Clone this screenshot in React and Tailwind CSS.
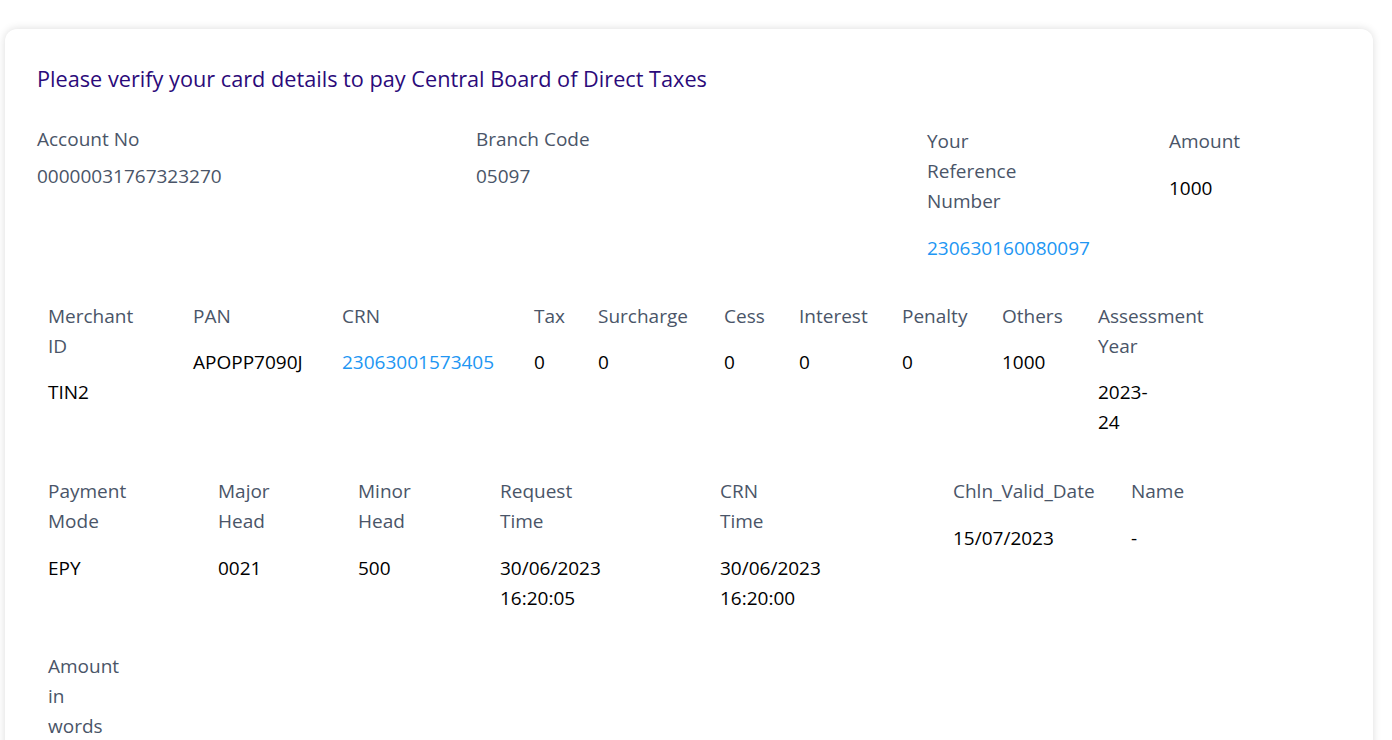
import React from "react";

const Label = ({ children, w }) => (
  <div className={`text-[#4a5568] ${w || ""}`}>{children}</div>
);

function Col({ width, wrap, label, value, link, gap = "mt-[17px]" }) {
  return (
    <div className={`shrink-0 ${width}`}>
      <div className={`text-[#4a5568] ${wrap || ""}`}>{label}</div>
      <div className={`${gap} ${wrap || ""} ${link ? "text-[#2196f3]" : "text-black"}`}>{value}</div>
    </div>
  );
}

export default function App() {
  return (
    <div
      className="min-h-screen bg-white pt-[29px] pl-[5px] pr-[19px] text-[19px] leading-[30px]"
      style={{ fontFamily: '"Open Sans", "Noto Sans", sans-serif' }}
    >
      <div className="rounded-xl bg-white shadow-[0_0_8px_rgba(0,0,0,0.14)] px-8 pt-[35px] pb-10 min-h-[760px]">
        <h1 className="text-[21.7px] leading-[30px] text-[#2b0a7a]">
          Please verify your card details to pay Central Board of Direct Taxes
        </h1>

        {/* Row 1 */}
        <div className="mt-[30px] flex">
          <div className="w-[439px] shrink-0">
            <Label>Account No</Label>
            <div className="mt-[7px] text-[#4a5568]">00000031767323270</div>
          </div>
          <div className="w-[451px] shrink-0">
            <Label>Branch Code</Label>
            <div className="mt-[7px] text-[#4a5568]">05097</div>
          </div>
          <div className="w-[242px] shrink-0 mt-[2px]">
            <Label w="w-[100px]">Your Reference Number</Label>
            <div className="mt-[17px] text-[#2196f3]">230630160080097</div>
          </div>
          <div className="mt-[2px]">
            <Label>Amount</Label>
            <div className="mt-[17px] text-black">1000</div>
          </div>
        </div>

        {/* Row 2 */}
        <div className="mt-[38px] pl-[11px] flex">
          <Col width="w-[145px]" wrap="w-[90px]" label="Merchant ID" value="TIN2" gap="mt-4" />
          <Col width="w-[149px]" label="PAN" value="APOPP7090J" gap="mt-4" />
          <Col width="w-[192px]" label="CRN" value="23063001573405" link gap="mt-4" />
          <Col width="w-[64px]" label="Tax" value="0" gap="mt-4" />
          <Col width="w-[126px]" label="Surcharge" value="0" gap="mt-4" />
          <Col width="w-[75px]" label="Cess" value="0" gap="mt-4" />
          <Col width="w-[103px]" label="Interest" value="0" gap="mt-4" />
          <Col width="w-[100px]" label="Penalty" value="0" gap="mt-4" />
          <Col width="w-[96px]" label="Others" value="1000" gap="mt-4" />
          <Col width="w-[60px]" wrap="w-[60px]" label="Assessment Year" value="2023-24" gap="mt-4" />
        </div>

        {/* Row 3 */}
        <div className="mt-[39px] pl-[11px] flex">
          <Col width="w-[170px]" wrap="w-[90px]" label="Payment Mode" value="EPY" />
          <Col width="w-[140px]" wrap="w-[75px]" label="Major Head" value="0021" />
          <Col width="w-[142px]" wrap="w-[75px]" label="Minor Head" value="500" />
          <Col width="w-[220px]" wrap="w-[80px]" label="Request Time" value="30/06/2023 16:20:05" />
          <Col width="w-[233px]" wrap="w-[60px]" label="CRN Time" value="30/06/2023 16:20:00" />
          <Col width="w-[178px]" label="Chln_Valid_Date" value="15/07/2023" />
          <Col width="w-[120px]" label="Name" value="-" />
        </div>

        {/* Row 4 */}
        <div className="mt-[38px] pl-[11px]">
          <div className="w-[55px] text-[#4a5568]">Amount in words</div>
        </div>
      </div>
    </div>
  );
}
